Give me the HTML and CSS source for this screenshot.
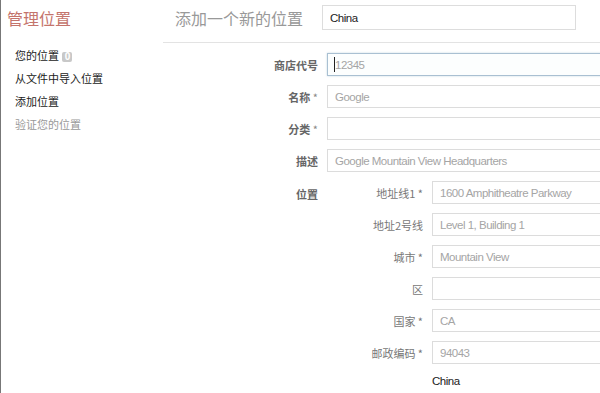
FILE: index.html
```html
<!DOCTYPE html>
<html>
<head>
	<meta charset="utf-8">
	<meta name="viewport" content="width=device-width, initial-scale=1">
	<title>管理位置</title>
	<link rel="stylesheet" href="styles.css">
</head>
<body>

<div class="pagina">
	<div class="ladoC">
		<h1 class="tituloC">管理位置</h1>
		<a class="itemC" href="#">您的位置 <span class="badgeC">0</span></a>
		<a class="itemC" href="#">从文件中导入位置</a>
		<a class="itemC" href="#">添加位置</a>
		<a class="itemC apagado" href="#">验证您的位置</a>
	</div>

	<div class="principalC">
		<div class="cabeceraC">
			<h2 class="subtituloC">添加一个新的位置</h2>
			<input class="paisC" type="text" value="China">
		</div>

		<div class="formC">
			<label class="etiqC">商店代号</label>
			<div class="focoC">
				<input class="campoC foco" type="text" placeholder="12345">
				<span class="cursorC"></span>
			</div>

			<label class="etiqC">名称 <i>*</i></label>
			<input class="campoC" type="text" placeholder="Google">

			<label class="etiqC">分类 <i>*</i></label>
			<input class="campoC" type="text">

			<label class="etiqC">描述</label>
			<input class="campoC" type="text" placeholder="Google Mountain View Headquarters">

			<label class="etiqC arriba">位置</label>
			<div class="subformC">
				<label class="subetiqC">地址线1 *</label>
				<input class="campoC" type="text" placeholder="1600 Amphitheatre Parkway">

				<label class="subetiqC">地址2号线</label>
				<input class="campoC" type="text" placeholder="Level 1, Building 1">

				<label class="subetiqC">城市 *</label>
				<input class="campoC" type="text" placeholder="Mountain View">

				<label class="subetiqC">区</label>
				<input class="campoC" type="text">

				<label class="subetiqC">国家 *</label>
				<input class="campoC" type="text" placeholder="CA">

				<label class="subetiqC">邮政编码 *</label>
				<input class="campoC" type="text" placeholder="94043">

				<span></span>
				<span class="paisTxtC">China</span>
			</div>
		</div>
	</div>
</div>

</body>
</html>
```

FILE: styles.css
```css
*,*:after,*:before{box-sizing: border-box; margin: 0; padding: 0;}
html, body{height: 100%; overflow: hidden;}
body{
	font-family: "Liberation Sans", "Noto Sans CJK SC", sans-serif;
	font-size: 12px;
	color: #333;
	background: #fff;
}

.pagina{
	display: flex;
	height: 100%;
	border-left: 1px solid #777;
}

/* columna izquierda */
.ladoC{
	width: 162px;
	flex: none;
	padding: 7px 0 0 6px;
	font-family: "Noto Sans CJK SC", sans-serif;
}
.tituloC{
	font-size: 16px;
	font-weight: normal;
	color: #c4746c;
	line-height: 22px;
	margin-bottom: 15px;
}
.itemC{
	display: block;
	font-size: 11px;
	line-height: 23px;
	color: #222;
	text-decoration: none;
	padding-left: 8px;
}
.itemC.apagado{color: #999;}
.badgeC{
	display: inline-block;
	vertical-align: 0;
	background: #c8c8c8;
	color: #fff;
	font-family: "Liberation Sans", sans-serif;
	font-weight: bold;
	font-size: 10px;
	line-height: 10px;
	width: 10px;
	height: 10px;
	text-align: center;
	border-radius: 2px;
	margin-left: 1px;
}

/* parte principal */
.principalC{flex: 1; min-width: 0;}

.cabeceraC{
	display: flex;
	align-items: center;
	height: 43px;
	padding: 0 0 7px 12px;
	border-bottom: 1px solid #e3e3e3;
}
.subtituloC{
	font-family: "Noto Sans CJK SC", sans-serif;
	font-size: 16px;
	font-weight: normal;
	color: #999;
	width: 147px;
}
.paisC{
	width: 254px;
	height: 25px;
	border: 1px solid #ddd;
	padding: 0 7px;
	font-family: inherit;
	font-size: 11.5px;
	letter-spacing: -0.5px;
	color: #222;
	outline: none;
}

.formC{
	display: grid;
	grid-template-columns: 155px 460px;
	column-gap: 9px;
	row-gap: 9px;
	padding-top: 10px;
	align-items: center;
}
.etiqC{
	text-align: right;
	font-family: "Noto Sans CJK SC", sans-serif;
	font-size: 11px;
	color: #666;
	font-weight: bold;
}
.etiqC i{font-style: normal; font-weight: normal; color: #888;}
.etiqC.arriba{align-self: start; margin-top: 5px;}

.campoC{
	height: 23px;
	width: 100%;
	border: 1px solid #dcdcdc;
	padding: 0 7px;
	font-family: inherit;
	font-size: 11.5px;
	letter-spacing: -0.5px;
	color: #999;
	outline: none;
	background: #fff;
}
.campoC::placeholder{color: #a5a5a5;}

.focoC{position: relative;}
.campoC.foco{
	border-color: #a9c0d2;
	box-shadow: 0 0 2px #c8d8e4;
	background: #fcfefe;
}
.cursorC{
	position: absolute;
	left: 7px;
	top: 4px;
	width: 1px;
	height: 15px;
	background: #222;
}

.subformC{
	display: grid;
	grid-template-columns: 96px 1fr;
	column-gap: 9px;
	row-gap: 9px;
	align-items: center;
}
.subetiqC{
	text-align: right;
	font-family: "Noto Sans CJK SC", sans-serif;
	font-size: 11px;
	color: #777;
}
.paisTxtC{
	font-size: 11.5px;
	letter-spacing: -0.5px;
	color: #222;
	margin-top: 2px;
}
```
